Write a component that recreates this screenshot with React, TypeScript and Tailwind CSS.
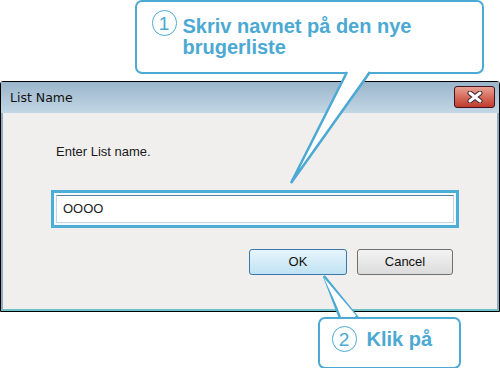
import React from 'react';

const blue = '#4ba9d3';

const Circled: React.FC<{ n: string }> = ({ n }) => (
    <span className="flex items-center justify-center w-[25px] h-[26px] rounded-full border-[1.5px] border-[#4ba9d3] text-[19px] font-normal leading-none shrink-0 pt-[1px]">
        {n}
    </span>
);

const App: React.FC = () => {
    return (
        <div className="relative w-[500px] h-[368px] bg-white overflow-hidden" style={{ fontFamily: '"Liberation Sans", Arial, sans-serif' }}>
            {/* dialog */}
            <div className="mt-[81px] w-[500px] h-[231px] border border-black rounded-tl-[3px] rounded-tr-[3px] flex flex-col">
                <div className="h-[31px] flex items-center justify-between pl-[9px] pr-[4px] bg-gradient-to-b from-[#9ab5cb] to-[#c3d7e5]">
                    <span className="text-[13px] text-[#111] pt-[2px]" style={{ fontFamily: '"DejaVu Sans", sans-serif', fontSize: '12.5px' }}>List Name</span>
                    <div className="w-[41px] h-[22px] mb-[2px] border border-[#40141c] rounded-[3px] flex items-center justify-center bg-gradient-to-b from-[#e8a294] via-[#d66b5c] to-[#c03a2d]">
                        <svg width="18" height="12" viewBox="0 0 18 12">
                            <path d="M4 2 L14 10 M14 2 L4 10" stroke="#3a2530" strokeWidth="5" strokeLinecap="round" />
                            <path d="M4 2 L14 10 M14 2 L4 10" stroke="#ffffff" strokeWidth="3" strokeLinecap="round" />
                        </svg>
                    </div>
                </div>
                <div className="flex-1 bg-[#f0efee] border-l-[2px] border-r-[2px] border-b-[2px] border-l-[#93abc0] border-r-[#93abc0] border-b-[#6cc2c6] flex flex-col">
                    <div className="pl-[53px] pt-[29px] text-[13px] text-[#1a1a1a]">Enter List name.</div>
                    <div className="ml-[48px] mt-[28px] w-[408px] h-[38px] border-[3px] border-[#4caed6] p-[2px] bg-[#f4fafc]">
                        <div className="w-full h-full bg-white border border-[#c5d6e0] border-t-[#5a7e9c] flex items-center pl-[6px] text-[13px] text-[#222]">
                            OOOO
                        </div>
                    </div>
                    <div className="flex justify-end gap-[10px] pr-[44px] mt-[21px]">
                        <div className="w-[98px] h-[26px] rounded-[3px] border border-[#3b7aa8] bg-gradient-to-b from-[#e6f5fd] to-[#c0e2f3] flex items-center justify-center text-[13px] text-[#111]">OK</div>
                        <div className="w-[96px] h-[26px] rounded-[3px] border border-[#707070] bg-gradient-to-b from-[#f3f3f3] to-[#dcdcdc] flex items-center justify-center text-[13px] text-[#111]">Cancel</div>
                    </div>
                </div>
            </div>

            {/* callout 1 */}
            <div className="absolute left-[135px] top-0 w-[349px] h-[74px] border-[2.5px] border-[#4ba9d3] rounded-[7px] bg-white text-[#4ba9d3] font-bold text-[20px] leading-[21px] pl-[14.5px] pt-[7.5px] flex gap-[6px]">
                <Circled n="1" />
                <div className="flex flex-col mt-[6.5px]">
                    <span>Skriv navnet på den nye</span>
                    <span>brugerliste</span>
                </div>
            </div>
            <svg className="absolute left-0 top-0" width="500" height="368">
                <polygon points="347,70 370,70 291,183" fill="white" />
                <polyline points="347,72 291,183 370,72" fill="none" stroke={blue} strokeWidth="2.5" strokeLinejoin="miter" />
                <polygon points="340,320 358,320 324,276" fill="white" />
                <polyline points="340,318 324,276 358,318" fill="none" stroke={blue} strokeWidth="2.5" />
            </svg>

            {/* callout 2 */}
            <div className="absolute left-[318px] top-[317px] w-[143px] h-[52px] border-[2.5px] border-[#4ba9d3] rounded-[7px] bg-white text-[#4ba9d3] font-bold text-[20px] flex items-start pl-[11.5px] pt-[6.5px] gap-[10px]">
                <Circled n="2" />
                <span className="leading-[26px]">Klik på</span>
            </div>
            <svg className="absolute left-0 top-0 pointer-events-none" width="500" height="368">
                <polygon points="341.5,316 356.5,316 324,278" fill="white" />
            </svg>
        </div>
    );
};

export default App;
